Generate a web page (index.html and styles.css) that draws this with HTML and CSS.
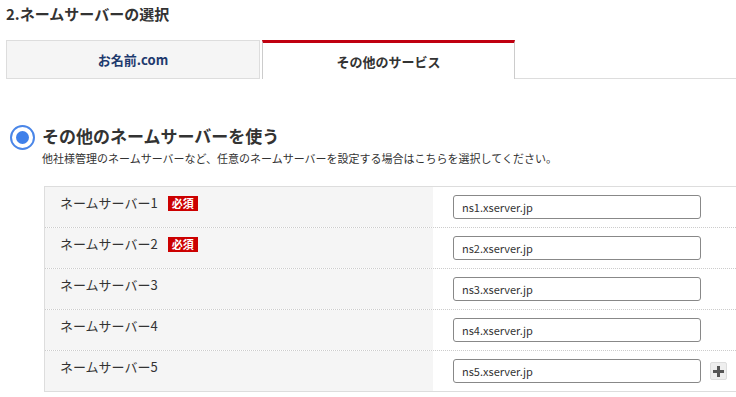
FILE: index.html
```html
<!DOCTYPE html>
<html lang="ja">
<head>
<meta charset="utf-8">
<link rel="stylesheet" href="styles.css">
</head>
<body>
<div class="page">
  <h2 class="title">2.ネームサーバーの選択</h2>
  <div class="tabs">
    <div class="tab tab-inactive">お名前.com</div>
    <div class="tab tab-active">その他のサービス</div>
    <div class="tab-fill"></div>
  </div>
  <div class="option">
    <span class="radio"><span class="radio-dot"></span></span>
    <div class="option-text">
      <div class="option-title">その他のネームサーバーを使う</div>
      <div class="option-desc">他社様管理のネームサーバーなど、任意のネームサーバーを設定する場合はこちらを選択してください。</div>
    </div>
  </div>
  <div class="ns-table">
    <div class="ns-row">
      <div class="ns-label">ネームサーバー1<span class="badge">必須</span></div>
      <div class="ns-field"><input class="ns-input" type="text" value="ns1.xserver.jp"></div>
    </div>
    <div class="ns-row">
      <div class="ns-label">ネームサーバー2<span class="badge">必須</span></div>
      <div class="ns-field"><input class="ns-input" type="text" value="ns2.xserver.jp"></div>
    </div>
    <div class="ns-row">
      <div class="ns-label">ネームサーバー3</div>
      <div class="ns-field"><input class="ns-input" type="text" value="ns3.xserver.jp"></div>
    </div>
    <div class="ns-row">
      <div class="ns-label">ネームサーバー4</div>
      <div class="ns-field"><input class="ns-input" type="text" value="ns4.xserver.jp"></div>
    </div>
    <div class="ns-row ns-row-last">
      <div class="ns-label">ネームサーバー5</div>
      <div class="ns-field"><input class="ns-input" type="text" value="ns5.xserver.jp"><span class="add-btn"><svg width="11" height="11" viewBox="0 0 11 11"><rect x="4" y="0" width="3" height="11" fill="#555"/><rect x="0" y="4" width="11" height="3" fill="#555"/></svg></span></div>
    </div>
  </div>
</div>
</body>
</html>
```

FILE: styles.css
```css
* { box-sizing: border-box; }
html, body { margin: 0; padding: 0; background: #fff; }
body {
  font-family: "Noto Sans CJK JP", "Noto Sans", sans-serif;
  color: #333;
  width: 736px;
  height: 397px;
  overflow: hidden;
}
.page { padding: 4px 0 0 6px; }
.title {
  margin: 0;
  font-size: 15px;
  line-height: 20px;
  font-weight: bold;
  color: #333;
}
.tabs {
  display: flex;
  margin-top: 16px;
  height: 39px;
}
.tab {
  display: flex;
  align-items: center;
  justify-content: center;
  font-size: 13px;
  font-weight: bold;
}
.tab-inactive {
  width: 254px;
  background: #f5f5f5;
  border: 1px solid #ddd;
  color: #1e3a6e;
}
.tab-active {
  width: 253px;
  margin-left: 2px;
  background: #fff;
  border-top: 3px solid #c00010;
  border-left: 1px solid #ccc;
  border-right: 1px solid #ccc;
  color: #333;
  padding-bottom: 0;
}
.tab-fill {
  flex: 1;
  border-bottom: 1px solid #ddd;
}
.option {
  display: flex;
  align-items: flex-start;
  margin-top: 45px;
  padding-left: 4px;
}
.radio {
  width: 25px;
  height: 25px;
  border-radius: 50%;
  border: 2.5px solid #4a86e8;
  display: flex;
  align-items: center;
  justify-content: center;
  margin-top: 1px;
  flex-shrink: 0;
}
.radio-dot {
  width: 13px;
  height: 13px;
  border-radius: 50%;
  background: #3f80ea;
}
.option-text { margin-left: 7px; }
.option-title {
  font-size: 17px;
  line-height: 24px;
  font-weight: bold;
  color: #333;
}
.option-desc {
  font-size: 11px;
  line-height: 16px;
  margin-top: 2px;
  color: #333;
}
.ns-table {
  margin: 20px 0 0 38px;
  border-top: 1px solid #ddd;
  border-bottom: 1px solid #ddd;
  border-left: 1px solid #ddd;
}
.ns-row {
  display: flex;
  border-bottom: 1px dotted #ccc;
}
.ns-row-last { border-bottom: none; }
.ns-label {
  width: 388px;
  background: #f5f5f5;
  padding: 6px 0 0 15px;
  font-size: 13px;
  line-height: 20px;
  display: flex;
  align-items: flex-start;
  color: #333;
}
.badge {
  background: #c00;
  color: #fff;
  font-size: 11px;
  line-height: 15px;
  padding: 0 4px;
  margin: 3px 0 0 10px;
  font-weight: bold;
}
.ns-field {
  flex: 1;
  display: flex;
  align-items: center;
  padding: 8px 0 8px 20px;
}
.ns-input {
  width: 248px;
  height: 24px;
  border: 1px solid #888;
  border-radius: 3px;
  padding: 0 8px;
  font-family: "Noto Sans CJK JP", "Noto Sans", sans-serif;
  font-size: 11px;
  color: #333;
  background: #fff;
  outline: none;
}
.add-btn {
  width: 17px;
  height: 18px;
  margin-left: 9px;
  background: #eee;
  border: 1px solid #ddd;
  border-radius: 2px;
  display: flex;
  align-items: center;
  justify-content: center;
}
```
